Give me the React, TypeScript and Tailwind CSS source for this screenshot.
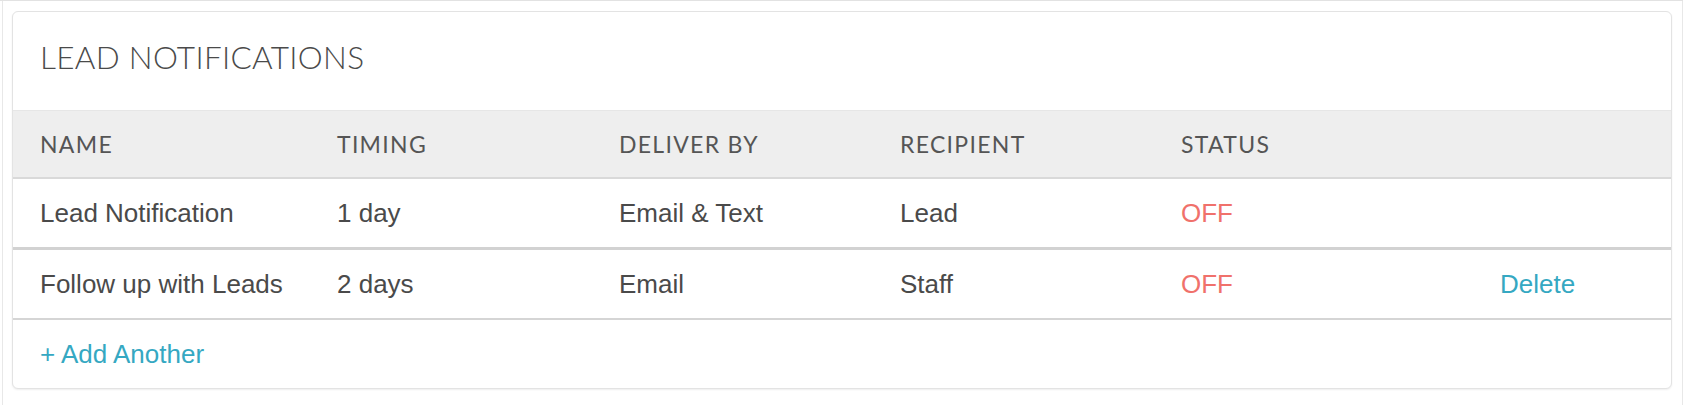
import React from "react";

const rows = [
  { name: "Lead Notification", timing: "1 day", deliver: "Email & Text", recipient: "Lead", status: "OFF", del: false },
  { name: "Follow up with Leads", timing: "2 days", deliver: "Email", recipient: "Staff", status: "OFF", del: true },
];

export default function App() {
  return (
    <div className="w-[1683px] h-[405px] bg-white border-t border-[#e2e2e2] overflow-hidden">
      <div className="ml-[2px] w-[1681px] h-[404px] border-l border-r border-[#e8e8e8] pt-[10px] pl-[9px]">
        <div className="w-[1660px] h-[378px] rounded-[6px] border border-[#e3e3e3] bg-white shadow-[0_1px_2px_rgba(0,0,0,0.07)] overflow-hidden">
          <div className="h-[98px] flex items-center pl-[27px]">
            <h1 className="text-[31.5px] font-light tracking-[0.3px] text-[#4a4a4a] font-['Lato',sans-serif] leading-none pb-[6px]">
              LEAD NOTIFICATIONS
            </h1>
          </div>
          <div className="h-[69px] border-t border-b-2 border-t-[#e6e6e6] border-b-[#d9d9d9] bg-[#eeeeee] grid grid-cols-[297px_282px_281px_281px_319px_1fr] items-center pl-[27px] text-[23px] tracking-[1.3px] text-[#555555] font-['Lato',sans-serif]">
            <div>NAME</div>
            <div>TIMING</div>
            <div>DELIVER BY</div>
            <div>RECIPIENT</div>
            <div>STATUS</div>
            <div></div>
          </div>
          {rows.map((r, i) => (
            <div
              key={i}
              className={
                i === 0
                  ? "h-[71px] border-b-[3px] border-[#d2d2d2] grid grid-cols-[297px_282px_281px_281px_319px_1fr] items-center pl-[27px] text-[26px] text-[#4a4a4a] font-['Liberation_Sans',Arial,sans-serif]"
                  : "h-[70px] border-b-2 border-[#d5d5d5] grid grid-cols-[297px_282px_281px_281px_319px_1fr] items-center pl-[27px] text-[26px] text-[#4a4a4a] font-['Liberation_Sans',Arial,sans-serif]"
              }
            >
              <div className="leading-none">{r.name}</div>
              <div className="leading-none">{r.timing}</div>
              <div className="leading-none">{r.deliver}</div>
              <div className="leading-none">{r.recipient}</div>
              <div className="leading-none text-[#f0716b]">{r.status}</div>
              <div className="leading-none text-[#35a8c2]">{r.del ? "Delete" : ""}</div>
            </div>
          ))}
          <div className="h-[67px] flex items-center pl-[27px] text-[26px] leading-none text-[#35a8c2] font-['Liberation_Sans',Arial,sans-serif]">
            + Add Another
          </div>
        </div>
      </div>
    </div>
  );
}
